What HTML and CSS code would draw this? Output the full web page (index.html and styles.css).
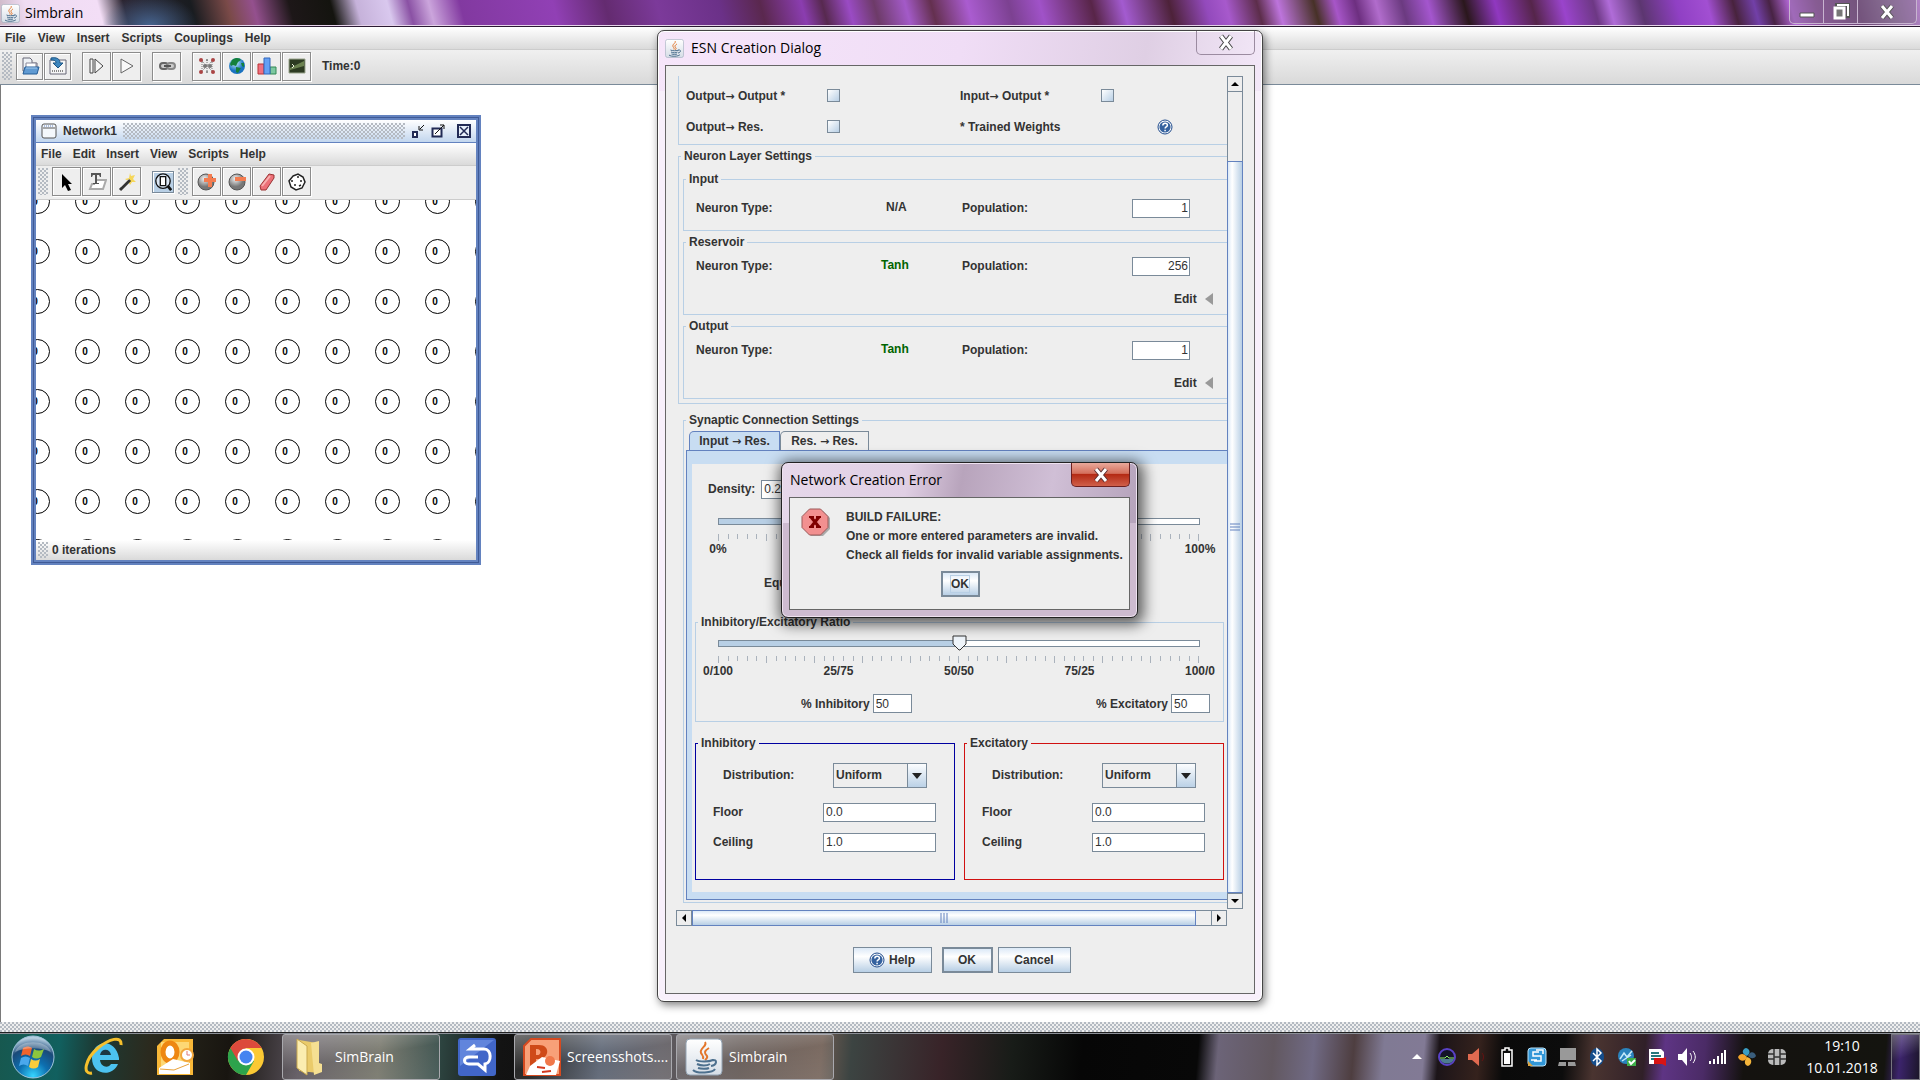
FILE: index.html
```html
<!DOCTYPE html>
<html lang="en">

<head>
    <meta charset="utf-8">
    <title>Simbrain</title>
    <link rel="stylesheet" href="styles.css">
</head>

<body>
    <svg class="defs" aria-hidden="true">
        <defs>
            <linearGradient id="tile" x2="0" y2="1">
                <stop offset="0" stop-color="#fff"/><stop offset="1" stop-color="#d5dde6"/>
            </linearGradient>
            <radialGradient id="ball" cx=".4" cy=".3">
                <stop offset="0" stop-color="#f4f4f4"/><stop offset="1" stop-color="#777"/>
            </radialGradient>
            <radialGradient id="orb" cx=".5" cy=".95" r=".9">
                <stop offset="0" stop-color="#35d5ff"/><stop offset=".4" stop-color="#0d6fb0"/><stop offset=".75" stop-color="#1a4a78"/><stop offset="1" stop-color="#b5cde0"/>
            </radialGradient>
            <radialGradient id="world" cx=".4" cy=".3">
                <stop offset="0" stop-color="#c8f4ff"/><stop offset="1" stop-color="#1a72c0"/>
            </radialGradient>
            <symbol id="java" viewBox="0 0 38 38">
                <rect x="1" y="1" width="36" height="36" rx="4" fill="url(#tile)" stroke="#93a3b3"/>
                <path d="M20 4c3 4-6 6-4 11 1 2 3 3 2 6M24 10c-5 3-5 5-2 8 1 2-1 3-2 4" fill="none" stroke="#e3762b" stroke-width="2"/>
                <path d="M11 22c3 2 13 2 17 0M12 26c4 2 10 2 13 0M13 30c3 1 9 1 11 0M27 22c6-1 5 5-1 6M8 32c4 4 20 3 22-1" fill="none" stroke="#4d708e" stroke-width="2"/>
            </symbol>
            <symbol id="help" viewBox="0 0 16 16">
                <circle cx="8" cy="8" r="7" fill="#fff" stroke="#1f4a8c"/>
                <circle cx="8" cy="8" r="5.6" fill="#35629f"/>
                <path d="M5.8 6.5c0-3 4.6-3 4.6-.3 0 1.700-2.300 1.700-2.300 3.300M8.100 10.800v1.500" fill="none" stroke="#fff" stroke-width="1.500"/>
            </symbol>
        </defs>
    </svg>

    <header class="titlebar">
        <svg class="app-icon"><use href="#java"/></svg>
        <h1>Simbrain</h1>
        <div class="window-buttons">
            <button aria-label="Minimize"><svg width="16" height="14"><path d="M1 8h14v4H1z" fill="#fff" stroke="#555"/></svg></button>
            <button aria-label="Restore"><svg width="18" height="18"><path d="M5 2h11v11H5z" fill="none" stroke="#555" stroke-width="4"/><path d="M5 2h11v11" fill="none" stroke="#fff" stroke-width="2"/><path d="M3 5h9v10H3z" fill="#777" stroke="#fff" stroke-width="3"/></svg></button>
            <button class="wide" aria-label="Close"><svg width="16" height="16"><path d="M3 2l10 12M13 2L3 14" stroke="#555" stroke-width="5"/><path d="M3 2l10 12M13 2L3 14" stroke="#fff" stroke-width="3"/></svg></button>
        </div>
    </header>

    <nav class="menubar">
        <button>File</button>
        <button>View</button>
        <button>Insert</button>
        <button>Scripts</button>
        <button>Couplings</button>
        <button>Help</button>
    </nav>

    <div class="toolbar main-toolbar">
        <span class="grip"></span>
        <div class="tools">
            <button class="tool small" aria-label="Open workspace"><svg viewBox="0 0 20 20"><path d="M3 2h7l2 2v3h5v8H3z" fill="#eef2f6" stroke="#667" /><path d="M6 7h10v6H6z" fill="#fff" stroke="#889"/><path d="M5 11h14l-2 7H3z" fill="#5f9ad2" stroke="#245c96"/><path d="M6 12h11" stroke="#a8cdf0"/></svg></button>
            <button class="tool small" aria-label="Save workspace"><svg viewBox="0 0 20 20"><path d="M2 4h16v14H2z" fill="#f6f6f6" stroke="#667"/><path d="M4 15h12" stroke="#888" stroke-width="2" stroke-dasharray="1 1"/><path d="M3 2c6-1 9 1 9 5h3l-5 5-5-5h3c0-2-1-3-5-3z" fill="#3d86be" stroke="#1c5484"/></svg></button>
        </div>
        <div class="tools">
            <button class="tool" aria-label="Step"><svg viewBox="0 0 20 20"><path d="M3 3h3v14H3zM8 3l8 7-8 7z" fill="#f8f8f8" stroke="#444"/></svg></button>
            <button class="tool" aria-label="Run"><svg viewBox="0 0 20 20"><path d="M4 3l12 7-12 7z" fill="#f8f8f8" stroke="#666"/></svg></button>
        </div>
        <div class="tools">
            <button class="tool" aria-label="Couplings"><svg viewBox="0 0 20 20"><rect x="3" y="7" width="8" height="6" rx="3" fill="#ccc" stroke="#666" stroke-width="2"/><rect x="10" y="7" width="8" height="6" rx="3" fill="#ccc" stroke="#888" stroke-width="2"/><path d="M7 10h7" stroke="#555" stroke-width="2"/></svg></button>
        </div>
        <div class="tools">
            <button class="tool" aria-label="New network"><svg viewBox="0 0 20 20"><path d="M5 5l10 10M15 5L5 15M10 4v12M5 4v12M15 4v12" stroke="#777" stroke-dasharray="1 1"/><g fill="#a44"><circle cx="4" cy="4" r="2"/><circle cx="4" cy="16" r="2"/><circle cx="16" cy="4" r="2"/><circle cx="16" cy="16" r="2"/></g><g fill="#777"><circle cx="10" cy="4" r="1"/><circle cx="8" cy="10" r="2"/><circle cx="13" cy="10" r="2"/><circle cx="10" cy="16" r="1"/></g></svg></button>
            <button class="tool" aria-label="New world"><svg viewBox="0 0 20 20"><circle cx="10" cy="10" r="8" fill="url(#world)"/><path d="M5 4c4-3 8-2 9 0l-3 2-2 4-3-1-2 1-1-2zM9 11l5 1-3 5-2-1zM14 7l3 0 0 4-2-1z" fill="#14803c"/></svg></button>
            <button class="tool" aria-label="New plot"><svg viewBox="0 0 20 20"><path d="M1 8h6v10H1z" fill="#f07080" stroke="#b33"/><path d="M13 11h6v7h-6z" fill="#7cc8a0" stroke="#385"/><path d="M7 2h6v16H7z" fill="#64a0f4" stroke="#36b"/></svg></button>
            <button class="tool" aria-label="New console"><svg viewBox="0 0 20 20"><path d="M2 3h16v14H2z" fill="#2d3b22" stroke="#9aa58c"/><path d="M3 12l14-7v5L3 14z" fill="#6b8250"/><path d="M5 8l2 2-2 2" stroke="#e8f0d8" fill="none"/></svg></button>
        </div>
        <span class="time">Time:0</span>
    </div>

    <main class="desktop">
        <section class="network">
            <header class="network-title">
                <svg width="16" height="16"><rect x="1" y="1" width="14" height="14" rx="2" fill="#f4f8fc" stroke="#555"/><path d="M2 5h12" stroke="#555"/><path d="M3 3h10" stroke="#6382bf" stroke-dasharray="1 1"/></svg>
                <h2>Network1</h2>
                <span class="bumps"></span>
                <button aria-label="Iconify"><svg width="14" height="14"><path d="M2 8h4v5H2z" fill="#fff" stroke="#222b55" stroke-width="2"/><path d="M13 1L9 5M8 2v4h4" fill="none" stroke="#111"/></svg></button>
                <button aria-label="Maximize"><svg width="14" height="14"><path d="M1.500 4.500h9v8h-9z" fill="#fff" stroke="#222b55" stroke-width="2"/><path d="M4 10l9-9M9 1h4v4" fill="none" stroke="#111"/></svg></button>
                <button class="close" aria-label="Close network"><svg width="14" height="14"><path d="M1 1h12v12H1z" fill="#e8f0fa" stroke="#222b55" stroke-width="2"/><path d="M3 3l8 8M11 3l-8 8" stroke="#222b55" stroke-width="1.500"/></svg></button>
            </header>
            <nav class="menubar inner-menu">
                <button>File</button>
                <button>Edit</button>
                <button>Insert</button>
                <button>View</button>
                <button>Scripts</button>
                <button>Help</button>
            </nav>
            <div class="toolbar">
                <span class="grip"></span>
                <div class="tools">
                    <button class="tool" aria-label="Select"><svg viewBox="0 0 20 20"><path d="M5 2v14l3-3 3 6 3-1-3-6h4z" fill="#000"/></svg></button>
                    <button class="tool" aria-label="Text"><svg viewBox="0 0 20 20"><path d="M10 8h9l-3 9H3l2-5h3" fill="#fff" stroke="#aaa" stroke-width="2"/><path d="M4 1h10v4h-1l-1-2h-2v8h2v1H6v-1h2V3H6L5 5H4z" fill="#555"/></svg></button>
                    <button class="tool" aria-label="Wand"><svg viewBox="0 0 20 20"><path d="M13 1l1 3 4-1-2 4 3 3-4 0-2 3-2-4-3-2 4-1z" fill="#f6d75a"/><path d="M3 18L13 8" stroke="#333" stroke-width="3"/><path d="M4 15l8-8" stroke="#aaa"/></svg></button>
                </div>
                <button class="tool pressed" aria-label="Auto zoom"><svg viewBox="0 0 20 20"><circle cx="10" cy="9" r="8" fill="#dce8f6" stroke="#111" stroke-width="1.500"/><path d="M7 4h6v10H7z" fill="#fff" stroke="#111" stroke-width="1.500"/><path d="M15 14l4 5" stroke="#111" stroke-width="3"/></svg></button>
                <span class="grip"></span>
                <div class="tools">
                    <button class="tool" aria-label="Add neuron"><svg viewBox="0 0 20 20"><circle cx="9" cy="10" r="8" fill="url(#ball)" stroke="#555"/><path d="M11 2h4v4h4v4h-4v5h-4v-5H7V6h4z" fill="#f47c50"/></svg></button>
                    <button class="tool" aria-label="Remove neuron"><svg viewBox="0 0 20 20"><circle cx="10" cy="10" r="8" fill="url(#ball)" stroke="#555"/><path d="M8 5h11v4H8z" fill="#f47c50"/></svg></button>
                    <button class="tool" aria-label="Erase"><svg viewBox="0 0 20 20"><path d="M12 2l5 1v3L9 18H4l-1-4z" fill="#ec7078" stroke="#933"/><path d="M5 14l8-10" stroke="#f8b0b0" stroke-width="2"/></svg></button>
                    <button class="tool" aria-label="Randomize"><svg viewBox="0 0 20 20"><path d="M6 4l5-2 5 3 2 5-3 6-6 2-5-3-2-6z" fill="#fff" stroke="#222" stroke-width="1.500"/><path d="M4 9h2M10 5h2M14 8v2M7 13h2M12 14l2-1" stroke="#222" stroke-width="1.500"/></svg></button>
                </div>
            </div>
            <div class="canvas"><div class="nodes" id="nodes"></div></div>
            <footer class="status"><span class="grip"></span>0 iterations</footer>
        </section>
    </main>
    <div class="strip"></div>

    <section class="dialog esn" role="dialog" aria-labelledby="esn-title">
        <header class="dialog-title">
            <svg class="app-icon"><use href="#java"/></svg>
            <h2 id="esn-title">ESN Creation Dialog</h2>
            <button class="dialog-close" aria-label="Close dialog"><svg width="18" height="18"><path d="M4 2l10 13M14 2L4 15" stroke="#444" stroke-width="5"/><path d="M4 2l10 13M14 2L4 15" stroke="#fff" stroke-width="3"/></svg></button>
        </header>
        <div class="client">
            <div class="scroll">
                <div class="viewport">
                    <div class="connections">
                        <label for="oo">Output<span class="arrow">→</span> Output *</label><input type="checkbox" id="oo">
                        <label for="io">Input<span class="arrow">→</span> Output *</label><input type="checkbox" id="io">
                        <label for="or">Output<span class="arrow">→</span> Res.</label><input type="checkbox" id="or">
                        <span>* Trained Weights</span><svg class="help-mark"><use href="#help"/></svg>
                    </div>

                    <fieldset class="layers">
                        <legend>Neuron Layer Settings</legend>
                        <fieldset class="layer input-layer">
                            <legend>Input</legend>
                            <div class="layer-row">
                                <span>Neuron Type:</span><span class="type">N/A</span>
                                <label for="pop1">Population:</label><input type="text" id="pop1" value="1">
                            </div>
                        </fieldset>
                        <fieldset class="layer">
                            <legend>Reservoir</legend>
                            <div class="layer-row">
                                <span>Neuron Type:</span><span class="type tanh">Tanh</span>
                                <label for="pop2">Population:</label><input type="text" id="pop2" value="256">
                            </div>
                            <button class="edit">Edit <span class="arrow-left"></span></button>
                        </fieldset>
                        <fieldset class="layer">
                            <legend>Output</legend>
                            <div class="layer-row">
                                <span>Neuron Type:</span><span class="type tanh">Tanh</span>
                                <label for="pop3">Population:</label><input type="text" id="pop3" value="1">
                            </div>
                            <button class="edit">Edit <span class="arrow-left"></span></button>
                        </fieldset>
                    </fieldset>

                    <fieldset class="synaptic">
                        <legend>Synaptic Connection Settings</legend>
                        <div class="tabs">
                            <button class="tab active"><span>Input <span class="arrow">→</span> Res.</span></button>
                            <button class="tab"><span>Res. <span class="arrow">→</span> Res.</span></button>
                        </div>
                        <div class="pane">
                            <div class="pane-inner">
                                <div class="density">
                                    <label for="density">Density:</label><input type="text" id="density" value="0.25">
                                </div>
                                <div class="slider">
                                    <input type="range" class="quarter" value="25" aria-label="Density slider">
                                    <div class="ticks"></div>
                                    <div class="scale"><span>0%</span><span>100%</span></div>
                                </div>
                                <div class="equalize">Equalize</div>
                                <fieldset class="ratio">
                                    <legend>Inhibitory/Excitatory Ratio</legend>
                                    <div class="slider">
                                        <input type="range" value="50" aria-label="Inhibitory/Excitatory ratio">
                                        <div class="ticks"></div>
                                        <div class="scale"><span>0/100</span><span>25/75</span><span>50/50</span><span>75/25</span><span>100/0</span></div>
                                    </div>
                                    <div class="percents">
                                        <div><label for="inh">% Inhibitory</label><input type="text" id="inh" value="50"></div>
                                        <div><label for="exc">% Excitatory</label><input type="text" id="exc" value="50"></div>
                                    </div>
                                </fieldset>
                                <div class="pair">
                                    <fieldset class="weights inhibitory">
                                        <legend>Inhibitory</legend>
                                        <div class="dist"><label for="d1">Distribution:</label><select id="d1"><option>Uniform</option></select></div>
                                        <div class="value"><label for="f1">Floor</label><input type="text" id="f1" value="0.0"></div>
                                        <div class="value"><label for="c1">Ceiling</label><input type="text" id="c1" value="1.0"></div>
                                    </fieldset>
                                    <fieldset class="weights excitatory">
                                        <legend>Excitatory</legend>
                                        <div class="dist"><label for="d2">Distribution:</label><select id="d2"><option>Uniform</option></select></div>
                                        <div class="value"><label for="f2">Floor</label><input type="text" id="f2" value="0.0"></div>
                                        <div class="value"><label for="c2">Ceiling</label><input type="text" id="c2" value="1.0"></div>
                                    </fieldset>
                                </div>
                            </div>
                        </div>
                    </fieldset>
                </div>
                <div class="vbar">
                    <button aria-label="Scroll up"><svg width="8" height="4"><path d="M0 4l4-4 4 4z"/></svg></button>
                    <div class="vtrack"></div>
                    <div class="vthumb"><svg width="10" height="8"><path d="M0 1h10M0 4h10M0 7h10" stroke="#6382bf"/></svg></div>
                    <button aria-label="Scroll down"><svg width="8" height="4"><path d="M0 0h8L4 4z"/></svg></button>
                </div>
                <div class="hbar">
                    <button aria-label="Scroll left"><svg width="4" height="8"><path d="M4 0v8L0 4z"/></svg></button>
                    <div class="hthumb"><svg width="8" height="10"><path d="M1 0v10M4 0v10M7 0v10" stroke="#6382bf"/></svg></div>
                    <div class="htrack"></div>
                    <button aria-label="Scroll right"><svg width="4" height="8"><path d="M0 0v8l4-4z"/></svg></button>
                </div>
            </div>
            <div class="actions">
                <button class="metal help-button"><svg class="help-mark"><use href="#help"/></svg>Help</button>
                <button class="metal default">OK</button>
                <button class="metal cancel">Cancel</button>
            </div>
        </div>
    </section>

    <section class="dialog error" role="alertdialog" aria-labelledby="error-title">
        <header class="dialog-title">
            <h2 id="error-title">Network Creation Error</h2>
            <button class="dialog-close red" aria-label="Close error"><svg width="18" height="16"><path d="M4 2l10 12M14 2L4 14" stroke="#5c3030" stroke-width="5"/><path d="M4 2l10 12M14 2L4 14" stroke="#fff" stroke-width="3"/></svg></button>
        </header>
        <div class="client">
            <div class="message">
                <svg width="30" height="30"><path d="M10 3h12l7 7v11l-7 7H10l-7-7V10z" fill="#aaa"/><path d="M8.500 1h11L27 8.500v11L19.500 27h-11L1 19.500v-11z" fill="#f29090" stroke="#9c5a5a"/><path d="M10 9l8 10M18 9l-8 10" stroke="#800000" stroke-width="3"/><path d="M8 9h5M15 9h5M8 19h5M15 19h5" stroke="#800000" stroke-width="2"/></svg>
                <p>BUILD FAILURE:<br>One or more entered parameters are invalid.<br>Check all fields for invalid variable assignments.</p>
            </div>
            <button class="metal default"><span class="focus">OK</span></button>
        </div>
    </section>

    <footer class="taskbar">
        <button class="launch" aria-label="Start"><svg width="44" height="44" viewBox="0 0 44 44"><circle cx="22" cy="22" r="21" fill="url(#orb)" stroke="#9fc4dc"/><path d="M12 13c4-2 6-2 9 0l-2 8c-3-2-6-2-9 0z" fill="#f0642c"/><path d="M23 14c3 2 6 2 10 0l-3 8c-3 2-6 2-9 0z" fill="#8cc63e"/><path d="M10 23c3-2 6-2 9 0l-2 8c-3-2-6-2-9 0z" fill="#4aa8ec"/><path d="M20 24c3 2 6 2 9 0l-2 8c-3 2-6 2-9 0z" fill="#fccc3c"/><path d="M4 17C8 4 36 4 40 17 30 12 14 12 4 17z" fill="#fff" opacity=".3"/></svg></button>
        <button class="launch" aria-label="Internet Explorer"><svg width="40" height="40" viewBox="0 0 40 40"><path d="M34 27c-5 13-26 12-26-6S31 0 35 21v2H16c1 8 9 8 11 4z" fill="#4cc3f0"/><path d="M16 18h11c-1-7-10-7-11 0z" fill="#1c3944"/><path d="M8 36C-2 38 1 22 14 11 25 2 38-2 37 8" fill="none" stroke="#f6c02c" stroke-width="3"/></svg></button>
        <button class="launch" aria-label="Outlook"><svg width="38" height="38" viewBox="0 0 38 38"><path d="M8 1h29v36H1V8z" fill="#f9b838"/><path d="M5 4h28v30H5z" fill="#fdd875"/><ellipse cx="14" cy="14" rx="7" ry="9" fill="#fff" stroke="#ee8712" stroke-width="5"/><path d="M3 30l14-9 17 4v11H3z" fill="#fff"/><path d="M4 31l14 1 15-6" fill="none" stroke="#e8a33c"/><circle cx="31" cy="17" r="6" fill="#fff" stroke="#f2a73c" stroke-width="2"/><path d="M31 13v4h3" fill="none" stroke="#d77"/></svg></button>
        <button class="launch" aria-label="Chrome"><svg width="38" height="38" viewBox="0 0 38 38"><circle cx="19" cy="19" r="18" fill="#fbc934"/><path d="M19 19L3.400 10A18 18 0 0 0 19 37l8-14z" fill="#2da34c"/><path d="M3.400 10A18 18 0 0 1 34.600 10H19L11 23z" fill="#dc4a3c"/><circle cx="19" cy="19" r="8.500" fill="#fff"/><circle cx="19" cy="19" r="6.500" fill="#4584f0"/></svg></button>
        <button class="task folder"><svg width="38" height="40" viewBox="0 0 38 40"><path d="M8 3l18 3v25l2 5-20-2z" fill="#eacb6a"/><path d="M20 6l8-2v22l3 1v8l-8 3z" fill="#f5df92"/><path d="M6 2l10 7v29L6 31z" fill="#fbedb0" stroke="#c9a94e"/></svg><span>SimBrain</span></button>
        <button class="launch chat" aria-label="Messenger"><svg width="38" height="38" viewBox="0 0 38 38"><rect width="38" height="38" rx="3" fill="#4166c8"/><path d="M2 2h34L2 28z" fill="#7799ea" opacity=".6"/><path d="M17 7l-5 4h14c8 0 8 14 1 15v6l-7-6h-9c-6 0-6-7 0-7h9" fill="none" stroke="#fff" stroke-width="3"/></svg></button>
        <button class="task"><svg width="38" height="38" viewBox="0 0 38 38"><path d="M8 1h29v36H1V8z" fill="#f8a078" stroke="#d54a20" stroke-width="2"/><path d="M7 7h9c12 0 10 14 0 14h-3v7H7zm6 4v6c6 1 6-7 0-6z" fill="#cf4a18"/><path d="M7 28l12-9 18 4-4 14H3z" fill="#fff"/><circle cx="27" cy="23" r="5" fill="#f0784a"/><path d="M14 29l8 1M19 34l9-1" stroke="#d43a20" stroke-width="2"/></svg><span>Screensshots....</span></button>
        <button class="task"><svg width="38" height="38"><use href="#java"/></svg><span>Simbrain</span></button>

        <div class="tray">
            <svg viewBox="0 0 20 20"><path d="M5 12l5-5 5 5z" fill="#fff"/></svg>
            <svg viewBox="0 0 20 20"><circle cx="10" cy="10" r="8" fill="#141428" stroke="#5942c6" stroke-width="2"/><path d="M3 12h14c-2 6-12 6-14 0z" fill="#4d7b90"/><path d="M3 11h5l2-2 2 2h5" fill="none" stroke="#8cf060"/></svg>
            <svg viewBox="0 0 20 20"><path d="M1 7h4l7-6v18l-7-6H1z" fill="#e06a50"/><path d="M15 6c2 2 2 6 0 8" fill="none" stroke="#611"/></svg>
            <svg viewBox="0 0 20 20"><path d="M8 1h4v2h3v16H5V3h3z" fill="none" stroke="#fff" stroke-width="1.500"/><path d="M7 6h6v11H7z" fill="#fff"/></svg>
            <svg viewBox="0 0 20 20"><rect x="1" y="1" width="18" height="18" rx="3" fill="#3297d8" stroke="#bce4fa"/><path d="M12 5h-6v4h8v5H7M4 13h6M9 3h7v4" fill="none" stroke="#fff" stroke-width="1.500"/><path d="M1 14l5 5H1z" fill="#dba645"/></svg>
            <svg viewBox="0 0 20 20"><path d="M3 1h16v12H3zM2 15h7v4H1zM11 15h7l1 4h-8z" fill="#999"/></svg>
            <svg viewBox="0 0 20 20"><ellipse cx="10" cy="10" rx="7" ry="9" fill="#144d8c"/><path d="M6 6l8 8-4 4V2l4 4-8 8" fill="none" stroke="#fff" stroke-width="1.500"/></svg>
            <svg viewBox="0 0 20 20"><circle cx="9" cy="9" r="8" fill="#2a83bd"/><path d="M3 12l4-6 3 4 5-6M5 14l9-6" stroke="#c5eafa" stroke-width="1.500" fill="none"/><path d="M10 11h9v8h-9z" fill="#3fae49"/><path d="M12 14l2 3 4-4" fill="none" stroke="#fff" stroke-width="2"/></svg>
            <svg viewBox="0 0 20 20"><path d="M2 2h12l3 3v12H2z" fill="#fff"/><path d="M4 6h8M4 9h10M4 12h5" stroke="#28777c" stroke-width="2"/><path d="M7 11l9 0 3-1v9l-4-2H7z" fill="#d81414"/></svg>
            <svg viewBox="0 0 20 20"><path d="M1 7h4l5-6v18l-5-6H1z" fill="#fff"/><path d="M13 6c2 3 2 6 0 8M16 4c3 4 3 8 0 12" fill="none" stroke="#fff"/></svg>
            <svg viewBox="0 0 20 20"><path d="M3 14v3M7 12v5M11 9v8M15 6v11M18 3v14" stroke="#fff" stroke-width="2"/></svg>
            <svg viewBox="0 0 20 20"><path d="M10 9C4 7 5 2 9 1c4 1 5 5 1 8z" fill="#3b9dc4"/><path d="M10 10c-2 6-8 4-9 0 2-4 6-4 9 0z" fill="#f4a42b"/><path d="M10 10c6 1 5 8 1 9-4-1-4-5-1-9z" fill="#f4b53b"/><path d="M11 9c2-6 7-4 8 0-2 3-5 3-8 0z" fill="#3a5e7c"/></svg>
            <svg viewBox="0 0 20 20"><rect x="1" y="2" width="18" height="16" rx="5" fill="#bbb"/><path d="M1 7h6M1 12h6M13 7h6M13 12h6M7 2v16M13 2v16M7 10h6" stroke="#333" stroke-width="1.500"/></svg>
        </div>
        <div class="clock">19:10<br>10.01.2018</div>
        <button class="show-desktop" aria-label="Show desktop"></button>
    </footer>
    <script src="script.js"></script>
</body>

</html>
```
FILE: styles.css
```css
* {
    box-sizing: border-box;
}

body {
    margin: 0;
    height: 100vh;
    display: flex;
    flex-direction: column;
    overflow: hidden;
    background: #fff;
    color: #333;
    font: bold 12px/14px "Liberation Sans", Arial, sans-serif;
}

button, input, select {
    font: inherit;
    color: inherit;
    margin: 0;
    padding: 0;
}

button {
    display: flex;
    align-items: center;
    justify-content: center;
    border: 0;
    background: none;
}

h1, h2 {
    margin: 0;
    font: 14px/20px "Open Sans", "Noto Sans", sans-serif;
    color: #000;
}

.defs {
    position: absolute;
    width: 0;
    height: 0;
}

.app-icon {
    width: 19px;
    height: 19px;
}

/* main window */
.titlebar {
    height: 27px;
    display: flex;
    align-items: center;
    gap: 5px;
    padding-left: 1px;
    border-bottom: 1px solid #2b1a33;
    box-shadow: inset 0 -1px #e6d4ea;
    background:
        radial-gradient(ellipse 60px 40px at 150px 26px, #46648f 0%, transparent 80%),
        linear-gradient(75deg, #c9b4c2 0, #efdcf2 30px, #f3def6 100px, #2b2430 125px, #191c20 190px, #7a4a48 225px, #94508e 250px, #1d1718 285px, #14140f 325px, #c6b2da 350px, #d9c8ee 380px, #8a51a4 400px, #cba5dc 420px, #8239a0 450px, #9140b5 540px, #642b70 590px, #7c3a9a 640px, #6b3188 700px, #5a284e 740px, #8b3db0 780px, #57294f 800px, #9a4bc4 825px, #6d3b68 850px, #a35ac8 880px, #64304f 905px, #aa5cd0 940px, #7c4191 980px, #a052c8 1010px, #582548 1060px, #a35bd0 1090px, #4d2239 1135px, #934abc 1170px, #a759cc 1190px, #5c2d4a 1220px, #bd74dc 1240px, #473127 1275px, #a756c8 1295px, #6d2f80 1315px, #b16ccc 1335px, #6b3a80 1360px, #a456ce 1385px, #2a171c 1420px, #9038c0 1450px, #55254a 1485px, #9a44cc 1515px, #6d3884 1545px, #b06cd8 1560px, #5c3670 1590px, #9040c4 1625px, #a24fd2 1655px, #48233d 1680px, #7240a8 1700px, #482344 1715px, #b468d8 1735px, #8a5098 1760px, #6c4474 1800px, #8c6e98 1830px, #bc88d4 1870px, #6c4084 1920px);
}

.titlebar h1 {
    flex: 1;
}

.window-buttons {
    display: flex;
    align-self: flex-start;
    height: 24px;
    margin-right: 3px;
    border: 1px solid #c8b4d0;
    border-top: 0;
    border-radius: 0 0 5px 5px;
    background: rgba(130, 110, 140, 0.4);
}

.window-buttons button {
    width: 34px;
    border-right: 1px solid #c8b4d0;
}

.window-buttons .wide {
    width: 58px;
    border: 0;
}

.menubar {
    height: 23px;
    display: flex;
    align-items: center;
    gap: 12px;
    padding-left: 5px;
    border-bottom: 1px solid #ccc;
    background: linear-gradient(#fff, #dadada);
}

.inner-menu {
    gap: 11px;
}

.toolbar {
    height: 35px;
    display: flex;
    align-items: center;
    padding: 0 0 2px 2px;
    border-bottom: 1px solid #ccc;
    background: #eee;
}

.main-toolbar {
    background: linear-gradient(#f0f0f0, #d9d9d9);
    border-bottom: 1px solid #7a8a99;
}

.grip, .bumps, .strip {
    background-image: radial-gradient(circle at 1px 1px, #b4bac2 1px, transparent 1px), radial-gradient(circle at 3px 3px, #b4bac2 1px, transparent 1px);
    background-size: 4px 4px;
}

.grip {
    width: 10px;
    align-self: stretch;
    margin: 2px 4px 2px 0;
}

.tools {
    display: flex;
    align-items: center;
    gap: 1px;
    margin-right: 11px;
}

.tool {
    width: 29px;
    height: 29px;
    border: 1px solid #8c8c8c;
    box-shadow: inset 1px 1px #fff, 1px 1px #fff;
    background: #eee;
}

.tool svg {
    width: 20px;
    height: 20px;
}

.tool.small {
    width: 27px;
    height: 27px;
}

.tool.pressed {
    width: 22px;
    height: 22px;
    margin-right: 4px;
    border-color: #7a8a99;
    background: #b8cfe5;
}

.tool.pressed svg {
    width: 18px;
    height: 18px;
}

.desktop {
    flex: 1;
    position: relative;
    border-left: 1px solid #7a7a7a;
}

.strip {
    height: 10px;
    background-color: #eee;
}

/* network frame */
.network {
    position: absolute;
    left: 30px;
    top: 30px;
    width: 450px;
    border: 5px solid #6382bf;
    outline: 1px solid #3f5a96;
    outline-offset: -3px;
    background: #eee;
}

.network-title {
    height: 23px;
    display: flex;
    align-items: center;
    gap: 6px;
    padding: 0 5px;
    border-bottom: 1px solid #6382bf;
    background: linear-gradient(#fff, #c2d6ee);
}

.network-title h2 {
    font: bold 12px/14px "Liberation Sans", Arial, sans-serif;
    color: #333;
}

.network-title .close {
    margin-left: 6px;
}

.bumps {
    flex: 1;
    height: 16px;
}

.network .toolbar {
    height: 34px;
}

.canvas {
    height: 340px;
    overflow: hidden;
    background: #fff;
}

/* the grid starts half a cell outside the view */
.nodes {
    width: 500px;
    margin: -24px 0 0 -24px;
    display: grid;
    grid-template-columns: repeat(10, 50px);
    grid-auto-rows: 50px;
    place-items: center;
}

.node {
    width: 25px;
    height: 25px;
    padding-right: 4px;
    border: 1px solid #000;
    border-radius: 50%;
    color: #000;
    font-size: 10px;
    line-height: 23px;
    text-align: center;
}

.status {
    height: 20px;
    display: flex;
    align-items: center;
    padding-left: 2px;
    background: linear-gradient(#fff, #dadada);
}

/* dialogs */
.dialog {
    position: absolute;
    border: 1px solid #444;
    border-radius: 7px;
    padding: 0 7px 7px;
}

.dialog .client {
    border: 1px solid #666;
    background: #eee;
}

.dialog-title {
    display: flex;
    align-items: center;
    gap: 7px;
}

.dialog-title h2 {
    flex: 1;
}

.esn {
    left: 657px;
    top: 30px;
    width: 606px;
    background: linear-gradient(100deg, #f6e6fa, #f0ddf6 50%, #dfcfe4 80%, #f3e8f8) top / 100% 60px no-repeat, #f8f0fb;
    box-shadow: inset 0 0 0 1px #fff, 2px 3px 8px rgba(0, 0, 0, 0.5);
}

.esn .dialog-title {
    height: 34px;
}

.dialog-close {
    align-self: flex-start;
    width: 59px;
    height: 24px;
    border: 1px solid #9b8ba0;
    border-top: 0;
    border-radius: 0 0 5px 5px;
}

.dialog-close.red {
    border-color: #6c2020;
    background: linear-gradient(#e9a99b, #d4705c 45%, #b42a14 50%, #d0604a);
}

.esn .client {
    padding: 10px 11px 20px 10px;
}

.scroll {
    display: grid;
    grid-template-columns: 551px 16px;
    grid-template-rows: 834px 16px;
}

.viewport {
    overflow: hidden;
    padding-left: 2px;
}

fieldset {
    margin: 0;
    padding: 0;
    min-width: 0;
    border: 1px solid #b8cfe5;
}

legend {
    margin-left: 2px;
    padding: 0 3px;
}

.arrow {
    font: bold 11px/12px "DejaVu Sans", sans-serif;
}

.connections {
    display: grid;
    grid-template-columns: 141px 133px 141px 1fr;
    grid-auto-rows: 31px;
    align-items: center;
    width: 600px;
    height: 69px;
    padding: 4px 0 0 7px;
    border: solid #b8cfe5;
    border-width: 0 0 1px 1px;
}

input[type="checkbox"] {
    appearance: none;
    width: 13px;
    height: 13px;
    border: 1px solid #7a8a99;
    background: linear-gradient(135deg, #fff, #b8cfe5);
}

.help-mark {
    width: 16px;
    height: 16px;
}

.connections .help-mark {
    margin-left: 56px;
}

.layers {
    width: 600px;
    margin-top: 4px;
    padding: 0 0 4px 4px;
}

.layers > legend {
    margin: 0 0 9px -2px;
}

.layer {
    height: 80px;
    margin-bottom: 4px;
}

.layer:last-child {
    margin-bottom: 0;
}

.layer-row {
    display: grid;
    grid-template-columns: 140px 126px 170px 58px;
    align-items: center;
    height: 34px;
    padding-left: 12px;
}

.input-layer {
    height: 59px;
}

.input-layer .layer-row {
    height: 44px;
}

.type {
    padding: 0 0 3px 50px;
}

.tanh {
    padding-left: 45px;
    color: #006400;
}

input[type="text"] {
    width: 100%;
    height: 19px;
    padding: 0 2px;
    border: 1px solid #7a8a99;
    background: #fff;
    font-weight: normal;
}

.layer input {
    text-align: right;
    padding-right: 1px;
}

.edit {
    gap: 8px;
    height: 31px;
    margin-left: 490px;
}

.arrow-left {
    border: solid transparent;
    border-width: 6px 8px 6px 0;
    border-right-color: #999;
}

.synaptic {
    width: 600px;
    height: 490px;
    margin: 9px 0 0 5px;
    padding-left: 2px;
}

.synaptic > legend {
    margin-left: 0;
}

.tabs {
    display: flex;
    margin-top: 4px;
    padding-left: 3px;
}

.tab {
    width: 89px;
    height: 19px;
    border: 1px solid #7a8a99;
    border-bottom: 0;
    border-top-left-radius: 5px;
}

.tab.active {
    width: 91px;
    border-color: #6382bf;
    background: #c8ddf2;
}

.pane {
    height: 450px;
    padding: 13px 0 7px 5px;
    border: 1px solid #6382bf;
    background: #c8ddf2;
}

.pane-inner {
    width: 535px;
    height: 428px;
    padding: 12px 0 0 3px;
    background: #eee;
}

.density {
    display: flex;
    align-items: center;
    gap: 6px;
    height: 26px;
    padding-left: 13px;
}

.density input {
    width: 60px;
}

.slider {
    width: 482px;
    height: 46px;
    margin: 10px 0 0 23px;
}

.slider input {
    appearance: none;
    display: block;
    width: 100%;
    height: 19px;
    background: none;
}

.slider input::-webkit-slider-runnable-track {
    height: 7px;
    border: 1px solid #7a8a99;
    background: linear-gradient(90deg, #b8cfe5 50%, #fff 50%);
}

.slider .quarter::-webkit-slider-runnable-track {
    background: linear-gradient(90deg, #b8cfe5 25%, #fff 25%);
}

.slider input::-webkit-slider-thumb {
    appearance: none;
    width: 15px;
    height: 16px;
    margin-top: -6px;
    border: 0;
    background: url("data:image/svg+xml,%3Csvg xmlns='http://www.w3.org/2000/svg' width='15' height='16'%3E%3Cpath d='M1 1h13v8l-6 6h-1l-6-6z' fill='%23eef4fa' stroke='%23333'/%3E%3C/svg%3E") no-repeat;
}

.ticks {
    display: flex;
    justify-content: space-between;
    height: 11px;
    padding-top: 3px;
}

.ticks i {
    width: 1px;
    height: 5px;
    background: #aab2bc;
}

.ticks i:nth-child(5n + 1) {
    height: 7px;
}

.scale {
    display: flex;
    justify-content: space-between;
    margin: 0 -30px;
}

.scale span {
    width: 60px;
    text-align: center;
}

.equalize {
    margin-top: 12px;
    padding-left: 69px;
    line-height: 26px;
}

.ratio {
    width: 529px;
    height: 107px;
    margin-top: 19px;
}

.ratio .slider {
    margin: 5px 0 0 22px;
}

.percents {
    display: flex;
    justify-content: space-between;
    margin-top: 14px;
    padding: 0 13px 0 105px;
}

.percents div {
    display: flex;
    align-items: center;
    gap: 3px;
}

.percents input {
    width: 39px;
}

.pair {
    display: grid;
    grid-template-columns: 260px 260px;
    gap: 9px;
    margin-top: 14px;
}

.weights {
    height: 144px;
}

.inhibitory {
    border-color: #0000a0;
}

.excitatory {
    border-color: #d01010;
}

.dist, .value {
    display: grid;
    grid-template-columns: 110px 113px;
    align-items: center;
    height: 30px;
    padding-left: 17px;
}

.dist {
    position: relative;
    margin: 10px 0 7px;
    padding-left: 27px;
}

select {
    appearance: none;
    width: 94px;
    height: 25px;
    padding-left: 2px;
    border: 1px solid #7a8a99;
    background:
        linear-gradient(#7a8a99, #7a8a99) right 18px top / 1px 25px no-repeat,
        linear-gradient(#fff, #b8cfe5) right / 18px 25px no-repeat,
        #eee;
}

/* drop-down arrow */
.dist::after {
    content: "";
    position: absolute;
    left: 216px;
    top: 13px;
    border: solid transparent;
    border-width: 6px 5px 0;
    border-top-color: #222;
    pointer-events: none;
}

/* scroll bars */
.vbar {
    display: flex;
    flex-direction: column;
    height: 833px;
}

.vbar button, .hbar button {
    border: 1px solid #7a8a99;
    background: #eee;
    flex: 0 0 16px;
}

.vtrack {
    height: 69px;
    border: solid #7a8a99;
    border-width: 0 1px;
}

.vthumb, .hthumb {
    flex: 1;
    display: flex;
    align-items: center;
    justify-content: center;
    border: 1px solid #6382bf;
    background: linear-gradient(90deg, #dce9f7, #fff 30%, #b8cfe5);
}

.hbar {
    display: flex;
}

.hthumb {
    background: linear-gradient(#dce9f7, #fff 30%, #b8cfe5);
}

.htrack {
    width: 15px;
    border: solid #7a8a99;
    border-width: 1px 0;
}

.actions {
    display: flex;
    justify-content: center;
    margin-top: 21px;
    padding-left: 4px;
}

.metal {
    width: 51px;
    height: 26px;
    border: 1px solid #7a8a99;
    background: linear-gradient(#dce9f7, #fff 35%, #b8cfe5);
}

.metal.default {
    border-width: 2px;
}

.help-button {
    width: 79px;
    gap: 4px;
    margin-right: 10px;
}

.cancel {
    width: 73px;
    margin-left: 5px;
}

/* error box */
.error {
    left: 781px;
    top: 462px;
    width: 357px;
    border-color: #222;
    background: linear-gradient(100deg, #e6d8ea, #e0cfe4 35%, #b8a4bc 50%, #d0bfd6 75%, #b5a3bb) top / 100% 60px no-repeat, #cdbbd0;
    box-shadow: inset 0 0 0 1px #eee2f0, 2px 3px 14px 4px rgba(0, 0, 0, 0.6);
}

.error .dialog-title {
    height: 34px;
    padding-left: 1px;
}

.error .client {
    height: 113px;
    padding: 10px 10px 0 11px;
}

.message {
    display: flex;
    gap: 15px;
}

.message svg {
    flex: none;
}

.message p {
    margin: 0;
    line-height: 19px;
    white-space: nowrap;
}

.error .metal {
    width: 39px;
    margin: 6px auto 0;
}

.focus {
    padding: 1px 0;
    outline: 1px solid #b8cfe5;
}

/* taskbar */
.taskbar {
    height: 48px;
    display: flex;
    align-items: center;
    border-top: 1px solid #222;
    box-shadow: inset 0 1px #8c9098;
    background:
        linear-gradient(95deg, #17584f 0, #11605f 60px, #1c3b35 95px, #2b2a1e 150px, #181510 230px, #554e56 300px, #6c6c60 380px, #2d4440 440px, #131313 500px, #111 530px, #4f5868 600px, #5d5a60 660px, #5b504c 740px, #6c5a50 820px, #3c4442 850px, #382328 940px, #181c18 1010px, #060606 1080px, #080808 1195px, #6c6478 1215px, #625860 1270px, #706a84 1310px, #4e3e40 1350px, #807a94 1380px, #827a95 1420px, #1b1418 1435px, #35221d 1475px, #0a0a0a 1500px, #0c0c0c 1560px, #4a3430 1590px, #302028 1640px, #5e3484 1660px, #4b2b66 1700px, #14120f 1740px, #14140f 1880px, #3c246c 1895px, #15131c 1920px);
    color: #fff;
    font: 14px/22px "Open Sans", "Noto Sans", sans-serif;
}

.launch {
    width: 66px;
    margin-right: 5px;
}

.taskbar .chat {
    width: 74px;
    margin: 0;
}

.task {
    width: 158px;
    height: 46px;
    justify-content: flex-start;
    gap: 6px;
    margin-right: 4px;
    padding-left: 8px;
    border: 1px solid #a9a9ae;
    border-radius: 3px;
    background: linear-gradient(170deg, rgba(255, 255, 255, 0.4), rgba(255, 255, 255, 0.1) 50%, rgba(255, 255, 255, 0.15));
}

.task.folder {
    margin: 0 0 0 -2px;
}

.tray {
    display: flex;
    gap: 10px;
    margin-left: auto;
}

.tray svg {
    width: 20px;
    height: 20px;
}

.clock {
    width: 98px;
    margin-left: 6px;
    text-align: center;
}

.show-desktop {
    width: 29px;
    height: 46px;
    border: 1px solid #77757f;
    background: linear-gradient(160deg, rgba(255, 255, 255, 0.3), transparent 50%);
}
```
FILE: script.js
```js
// neurons of Network1, 8 rows of 10
var COLS = 10, ROWS = 8;
var nodes = document.getElementById('nodes');
for (var i = 0; i < ROWS * COLS; i++) {
    var node = document.createElement('span');
    node.className = 'node';
    // last row and column only show their rim
    if (i < (ROWS - 1) * COLS && i % COLS < COLS - 1) {
        node.textContent = '0';
    }
    nodes.appendChild(node);
}

// slider ticks
document.querySelectorAll('.ticks').forEach(function (ticks) {
    for (var i = 0; i <= 50; i++) {
        ticks.appendChild(document.createElement('i'));
    }
});
```
